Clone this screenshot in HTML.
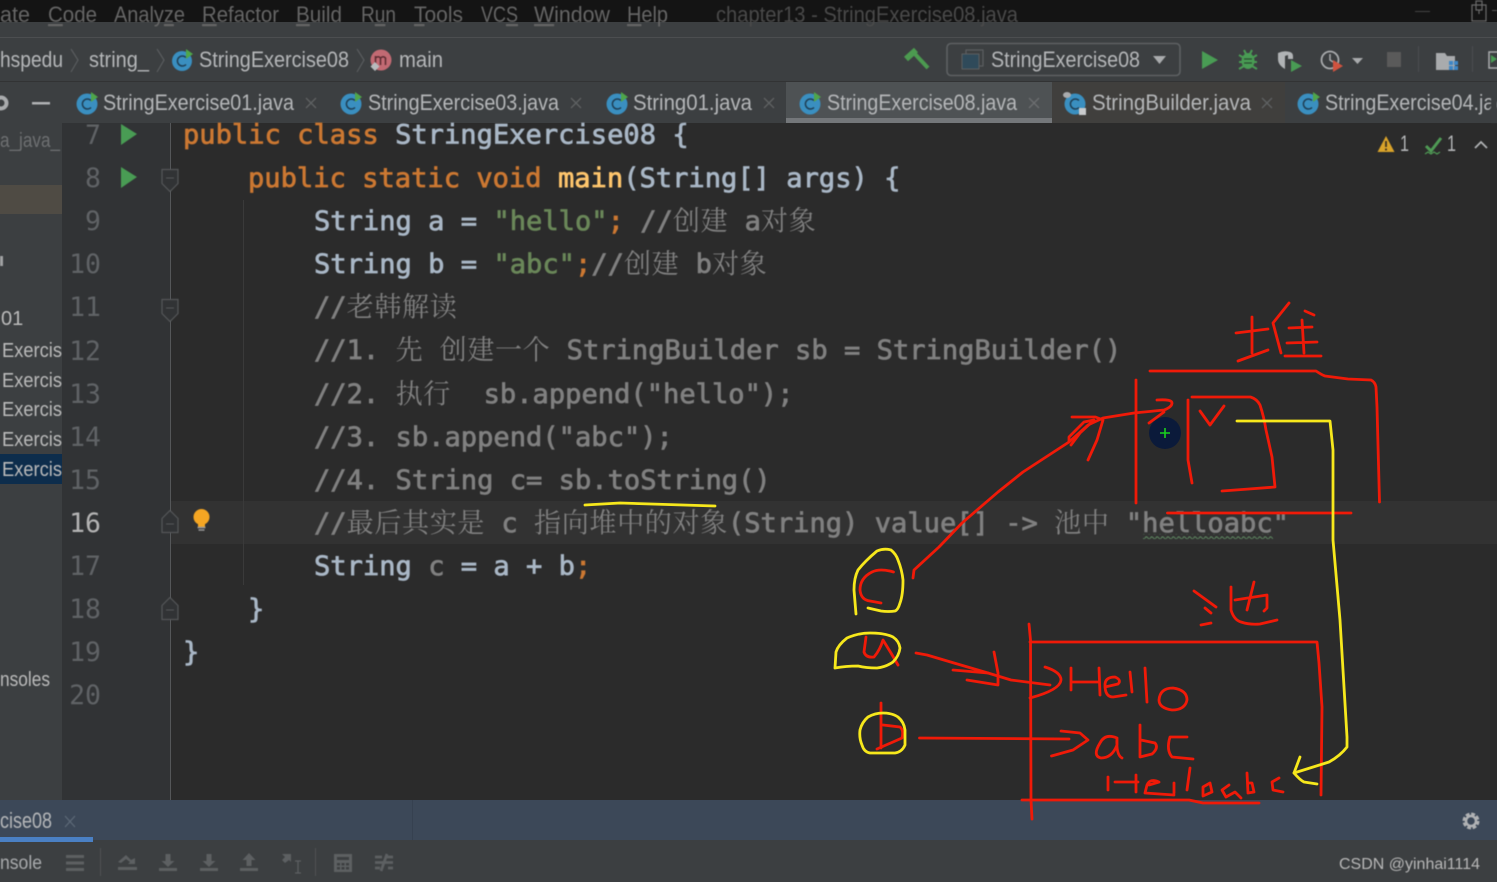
<!DOCTYPE html>
<html><head><meta charset="utf-8"><style>
html,body{margin:0;padding:0;background:#2b2b2b;overflow:hidden}
svg{display:block}
.m{font-family:"DejaVu Sans Mono","Noto Serif CJK SC",monospace;font-size:27.1px;white-space:pre;stroke-width:.75px}
.k{fill:#cc7832;stroke:#cc7832}.i{fill:#a9b7c6;stroke:#a9b7c6}.s{fill:#6a8759;stroke:#6a8759}.c{fill:#808080;stroke:#808080}.f{fill:#ffc66d;stroke:#ffc66d}
.z{letter-spacing:.6px;stroke-width:0}
.n{font-family:"DejaVu Sans Mono",monospace;font-size:26.500px;fill:#606366;text-anchor:end}
.u{font-family:"Liberation Sans","Noto Sans CJK SC",sans-serif;font-size:22px;fill:#bbbbbb}
.t{fill:#b5b7b9;font-size:22px}
.menu{fill:#666;font-size:22px}
.r{fill:none;stroke:#f01a08;stroke-width:2.8;stroke-linecap:round;stroke-linejoin:round}
.y{fill:none;stroke:#f7e81c;stroke-width:2.8;stroke-linecap:round;stroke-linejoin:round}
.ic{fill:#5d6062}
.txt{filter:blur(.4px)}
.ul{text-decoration:underline}
</style></head><body>
<svg width="1497" height="882" viewBox="0 0 1497 882" xmlns="http://www.w3.org/2000/svg">
<defs>
<pattern id="w" width="5.4" height="5" patternUnits="userSpaceOnUse"><path d="M0 3.5Q1.35 .5 2.7 2.5T5.4 3.5" fill="none" stroke="#5f8a62" stroke-width="1"/></pattern>
</defs>
<!-- base regions -->
<rect width="1497" height="882" fill="#2b2b2b"/>
<rect width="1497" height="22" fill="#141414"/>
<rect y="22" width="1497" height="60" fill="#3c3f41"/>
<rect y="37" width="1497" height="1" fill="#4c4e50"/>
<rect y="81" width="1497" height="1" fill="#323334"/>
<rect y="82" width="1497" height="41" fill="#3c3f41"/>
<rect x="786" y="82" width="266" height="36" fill="#4e5254"/>
<rect x="786" y="118" width="266" height="5" fill="#74777a"/>
<rect x="1052" y="82" width="233" height="41" fill="#403f3d"/>
<rect y="123" width="62" height="677" fill="#3c3f41"/>
<rect y="185" width="62" height="29" fill="#4f4b44"/>
<rect y="454" width="62" height="30" fill="#0d2d4c"/>
<rect x="62" y="123" width="108" height="677" fill="#313335"/>
<rect x="170" y="501" width="1327" height="43" fill="#323232"/>
<rect x="170" y="123" width="1" height="677" fill="#555759"/>
<rect x="243" y="200" width="1" height="385" fill="#3a3a3a"/>
<rect y="800" width="1497" height="40" fill="#3c4858"/>
<rect x="412" y="800" width="1" height="40" fill="#364150"/>
<rect y="840" width="1497" height="42" fill="#3c3f41"/>
<rect y="837" width="93" height="5" fill="#4a80c4"/>

<g class="txt">
<!-- menu -->
<text class="u menu" x="-12" y="22" textLength="42" lengthAdjust="spacingAndGlyphs">gate</text>
<text class="u menu" x="48" y="22" textLength="49" lengthAdjust="spacingAndGlyphs"><tspan class="ul">C</tspan>ode</text>
<text class="u menu" x="114" y="22" textLength="71" lengthAdjust="spacingAndGlyphs">Analy<tspan class="ul">z</tspan>e</text>
<text class="u menu" x="202" y="22" textLength="77" lengthAdjust="spacingAndGlyphs"><tspan class="ul">R</tspan>efactor</text>
<text class="u menu" x="296" y="22" textLength="46" lengthAdjust="spacingAndGlyphs"><tspan class="ul">B</tspan>uild</text>
<text class="u menu" x="361" y="22" textLength="35" lengthAdjust="spacingAndGlyphs">R<tspan class="ul">u</tspan>n</text>
<text class="u menu" x="414" y="22" textLength="49" lengthAdjust="spacingAndGlyphs"><tspan class="ul">T</tspan>ools</text>
<text class="u menu" x="481" y="22" textLength="37" lengthAdjust="spacingAndGlyphs">VC<tspan class="ul">S</tspan></text>
<text class="u menu" x="534" y="22" textLength="76" lengthAdjust="spacingAndGlyphs"><tspan class="ul">W</tspan>indow</text>
<text class="u menu" x="627" y="22" textLength="41" lengthAdjust="spacingAndGlyphs"><tspan class="ul">H</tspan>elp</text>
<text class="u" style="fill:#4a4a4a" x="716" y="22" textLength="302" lengthAdjust="spacingAndGlyphs">chapter13 - StringExercise08.java</text>
<rect x="1415" y="11" width="15" height="1" fill="#444"/>
<path d="M1472 5h14v16h-14zM1476 1h6v9h-6zM1479 10v4" fill="none" stroke="#6a6a6a" stroke-width="1.2"/>
<rect x="1492" y="10" width="5" height="1" fill="#555"/>

<!-- breadcrumb -->
<text class="u t" x="0" y="67" textLength="63" lengthAdjust="spacingAndGlyphs">hspedu</text>
<path d="M71 49l7 11-7 12" fill="none" stroke="#5a5d5f" stroke-width="1.2"/>
<text class="u t" x="89" y="67" textLength="60" lengthAdjust="spacingAndGlyphs">string_</text>
<path d="M157 49l7 11-7 12" fill="none" stroke="#5a5d5f" stroke-width="1.2"/>
<circle cx="182" cy="61" r="10" fill="#3a8fc0"/><path d="M186 57.5a5 5 0 1 0 0 7" fill="none" stroke="#1f3f55" stroke-width="1.5"/><path d="M186 49l7 5-7 5z" fill="#4fa64a"/>
<text class="u t" x="199" y="67" textLength="150" lengthAdjust="spacingAndGlyphs">StringExercise08</text>
<path d="M357 49l7 11-7 12" fill="none" stroke="#5a5d5f" stroke-width="1.2"/>
<circle cx="381" cy="60" r="10.5" fill="#c26a73"/>
<path d="M375.500 65v-9m0 2q2.800-2.500 5 0v7m0-7q2.800-2.500 5 0v7" fill="none" stroke="#5a2a30" stroke-width="1.500"/>
<path d="M375 62l4.500 4.500-4.500 4.500-4.500-4.500z" fill="#b8bbbd"/>
<text class="u t" x="399" y="67" textLength="44" lengthAdjust="spacingAndGlyphs">main</text>

<!-- toolbar right -->
<path d="M906 59L916 50" stroke="#4c9a50" stroke-width="6" fill="none"/><path d="M914 53L928 68" stroke="#4c9a50" stroke-width="4" fill="none"/>
<rect x="947" y="43.500" width="233" height="32" rx="4" fill="none" stroke="#5e6163" stroke-width="1.600"/>
<rect x="966" y="50" width="17" height="16" fill="none" stroke="#5c5f61" stroke-width="1.200"/>
<rect x="962" y="54" width="17" height="15" fill="#2f4a5a" stroke="#5c5f61"/>
<text class="u t" x="991" y="67" textLength="149" lengthAdjust="spacingAndGlyphs">StringExercise08</text>
<path d="M1153 56h13l-6.500 8z" fill="#a9abad"/>
<path d="M1202 51l16 9-16 9z" fill="#499c54"/>
<ellipse cx="1248" cy="61" rx="6.500" ry="8" fill="#499c54"/><path d="M1239 55l5 3M1257 55l-5 3M1239 62h5M1257 62h-5M1239 69l5-3M1257 69l-5-3M1244 50l2 4M1252 50l-2 4" stroke="#499c54" stroke-width="2"/><path d="M1244 59h8M1244 63h8" stroke="#2a4a30" stroke-width="1.200"/>
<path d="M1278 53q6-3 12-1q3 1 3 4v3h-5v-4l-3 1v13q-7-4-7-10z" fill="#b0b3b5"/><path d="M1291 60l11 6-11 6z" fill="#499c54"/>
<circle cx="1330" cy="60" r="8.500" fill="none" stroke="#a9abad" stroke-width="1.800"/><path d="M1330 54v6l3 2" fill="none" stroke="#a9abad" stroke-width="1.500"/><path d="M1333 60l10 6-10 6z" fill="#d0533f"/>
<path d="M1352 58h11l-5.500 6z" fill="#a9abad"/>
<rect x="1387" y="52" width="14" height="15" fill="#5a5a5a"/>
<rect x="1418" y="46" width="1" height="26" fill="#4c4e50"/>
<path d="M1436 53h9l2 3h8v14h-19z" fill="#a9abad"/><rect x="1449" y="61" width="4" height="4" fill="#3d86c6"/><rect x="1454" y="61" width="4" height="4" fill="#3d86c6"/><rect x="1449" y="66" width="4" height="4" fill="#3d86c6"/><rect x="1454" y="66" width="4" height="4" fill="#3d86c6"/>
<rect x="1472" y="46" width="1" height="26" fill="#4c4e50"/>
<rect x="1489" y="52" width="12" height="16" fill="none" stroke="#a9abad" stroke-width="1.500"/><path d="M1491 55l6 4-6 4z" fill="#499c54"/>

<!-- tab bar -->
<circle cx="1" cy="103" r="5.500" fill="none" stroke="#a9abad" stroke-width="4"/>
<rect x="32" y="102" width="18" height="2.500" fill="#b0b2b4"/>

<circle cx="87" cy="104" r="10.500" fill="#3a8fc0"/><path d="M91 100.500a5 5 0 1 0 0 7" fill="none" stroke="#1f3f55" stroke-width="1.500"/><path d="M91 92l7 5-7 5z" fill="#4fa64a"/>
<text class="u t" x="103" y="110" textLength="191" lengthAdjust="spacingAndGlyphs">StringExercise01.java</text>
<path d="M306 98l10 10M316 98l-10 10" stroke="#5f6163" stroke-width="1.300"/>

<circle cx="351" cy="104" r="10.500" fill="#3a8fc0"/><path d="M355 100.500a5 5 0 1 0 0 7" fill="none" stroke="#1f3f55" stroke-width="1.500"/><path d="M355 92l7 5-7 5z" fill="#4fa64a"/>
<text class="u t" x="368" y="110" textLength="191" lengthAdjust="spacingAndGlyphs">StringExercise03.java</text>
<path d="M571 98l10 10M581 98l-10 10" stroke="#5f6163" stroke-width="1.300"/>

<circle cx="617" cy="104" r="10.500" fill="#3a8fc0"/><path d="M621 100.500a5 5 0 1 0 0 7" fill="none" stroke="#1f3f55" stroke-width="1.500"/><path d="M621 92l7 5-7 5z" fill="#4fa64a"/>
<text class="u t" x="633" y="110" textLength="119" lengthAdjust="spacingAndGlyphs">String01.java</text>
<path d="M764 98l10 10M774 98l-10 10" stroke="#5f6163" stroke-width="1.300"/>

<circle cx="810" cy="104" r="10.500" fill="#3a8fc0"/><path d="M814 100.500a5 5 0 1 0 0 7" fill="none" stroke="#1f3f55" stroke-width="1.500"/><path d="M814 92l7 5-7 5z" fill="#4fa64a"/>
<text class="u t" x="827" y="110" textLength="190" lengthAdjust="spacingAndGlyphs">StringExercise08.java</text>
<path d="M1029 98l10 10M1039 98l-10 10" stroke="#6c6e70" stroke-width="1.300"/>

<circle cx="1075" cy="104" r="10.500" fill="#3a8fc0"/><path d="M1079 100.500a5 5 0 1 0 0 7" fill="none" stroke="#1f3f55" stroke-width="1.500"/><ellipse cx="1067" cy="95" rx="4" ry="3" fill="#a9abad"/><rect x="1079" y="108" width="7" height="7" fill="#c9cbcd"/>
<text class="u t" x="1092" y="110" textLength="159" lengthAdjust="spacingAndGlyphs">StringBuilder.java</text>
<path d="M1262 98l10 10M1272 98l-10 10" stroke="#5f6163" stroke-width="1.300"/>

<circle cx="1308" cy="104" r="10.500" fill="#3a8fc0"/><path d="M1312 100.500a5 5 0 1 0 0 7" fill="none" stroke="#1f3f55" stroke-width="1.500"/><path d="M1313 92l7 5-7 5z" fill="#4fa64a"/>
<text class="u t" x="1325" y="110" textLength="190" lengthAdjust="spacingAndGlyphs">StringExercise04.java</text>
<rect x="1491" y="82" width="6" height="41" fill="#3c3f41"/>

<!-- sidebar -->
<text class="u" style="fill:#6e7072;font-size:20px" x="0" y="147" textLength="60" lengthAdjust="spacingAndGlyphs">a_java_</text>
<rect x="0" y="256" width="3" height="10" fill="#a0a2a4"/>
<text class="u" style="font-size:20px" x="1" y="325">01</text>
<text class="u" style="font-size:20px" x="2" y="357" textLength="60" lengthAdjust="spacingAndGlyphs">Exercis</text>
<text class="u" style="font-size:20px" x="2" y="387" textLength="60" lengthAdjust="spacingAndGlyphs">Exercis</text>
<text class="u" style="font-size:20px" x="2" y="416" textLength="60" lengthAdjust="spacingAndGlyphs">Exercis</text>
<text class="u" style="font-size:20px" x="2" y="446" textLength="60" lengthAdjust="spacingAndGlyphs">Exercis</text>
<text class="u" style="font-size:20px" x="2" y="476" textLength="60" lengthAdjust="spacingAndGlyphs">Exercis</text>
<text class="u" style="font-size:20px" x="0" y="686" textLength="50" lengthAdjust="spacingAndGlyphs">nsoles</text>

<!-- line numbers -->
<text class="n" x="101" y="144">7</text>
<text class="n" x="101" y="187">8</text>
<text class="n" x="101" y="230">9</text>
<text class="n" x="101" y="273">10</text>
<text class="n" x="101" y="316">11</text>
<text class="n" x="101" y="360">12</text>
<text class="n" x="101" y="403">13</text>
<text class="n" x="101" y="446">14</text>
<text class="n" x="101" y="489">15</text>
<text class="n" x="101" y="532" style="fill:#b4b4b4">16</text>
<text class="n" x="101" y="575">17</text>
<text class="n" x="101" y="618">18</text>
<text class="n" x="101" y="661">19</text>
<text class="n" x="101" y="704">20</text>

<!-- gutter icons -->
<path d="M121 124l16 10-16 11z" fill="#499c54"/>
<path d="M121 167l16 10-16 11z" fill="#499c54"/>
<path d="M162 169.500h16v14l-8 8-8-8z" fill="#313335" stroke="#555759" stroke-width="1.200"/><path d="M166 178h8" stroke="#555759"/>
<path d="M162 299.500h16v14l-8 8-8-8z" fill="#313335" stroke="#555759" stroke-width="1.200"/><path d="M166 308h8" stroke="#555759"/>
<path d="M162 532.500h16v-14l-8-8-8 8z" fill="#313335" stroke="#555759" stroke-width="1.200"/><path d="M166 524h8" stroke="#555759"/>
<path d="M162 619.500h16v-14l-8-8-8 8z" fill="#313335" stroke="#555759" stroke-width="1.200"/><path d="M166 610h8" stroke="#555759"/>
<circle cx="201.500" cy="517" r="8" fill="#f5a623"/><path d="M198 524h7v3h-7z" fill="#f5a623"/><path d="M197.500 527.500h8M198.500 530h6" stroke="#9a9a9a" stroke-width="1.500"/>

<!-- code -->
<text class="m" y="143.500" x="183"><tspan class="k">public class </tspan><tspan class="i">StringExercise08 {</tspan></text>
<text class="m" y="187" x="248"><tspan class="k">public static void </tspan><tspan class="f">main</tspan><tspan class="i">(String[] args) {</tspan></text>
<text class="m" y="230" x="314"><tspan class="i">String a = </tspan><tspan class="s">"hello"</tspan><tspan class="k">;</tspan><tspan class="c"> //</tspan><tspan class="c z">创建</tspan><tspan class="c"> a</tspan><tspan class="c z">对象</tspan></text>
<text class="m" y="273" x="314"><tspan class="i">String b = </tspan><tspan class="s">"abc"</tspan><tspan class="k">;</tspan><tspan class="c">//</tspan><tspan class="c z">创建</tspan><tspan class="c"> b</tspan><tspan class="c z">对象</tspan></text>
<text class="m c" y="316" x="314">//<tspan class="z">老韩解读</tspan></text>
<text class="m c" y="359" x="314">//1. <tspan class="z">先</tspan> <tspan class="z">创建一个</tspan> StringBuilder sb = StringBuilder()</text>
<text class="m c" y="403" x="314">//2. <tspan class="z">执行</tspan>  sb.append("hello");</text>
<text class="m c" y="446" x="314">//3. sb.append("abc");</text>
<text class="m c" y="489" x="314">//4. String c= sb.toString()</text>
<text class="m c" y="532" x="314">//<tspan class="z">最后其实是</tspan> c <tspan class="z">指向堆中的对象</tspan>(String) value[] -> <tspan class="z">池中</tspan> "helloabc"</text>
<text class="m" y="575" x="314"><tspan class="i">String </tspan><tspan class="c">c</tspan><tspan class="i"> = a + b</tspan><tspan class="k">;</tspan></text>
<text class="m i" y="618" x="248">}</text>
<text class="m i" y="661" x="183">}</text>
<rect x="1143" y="534" width="130" height="5" fill="url(#w)"/>

<!-- inspections -->
<path d="M1386 136l8.500 16h-17z" fill="#d9a32a"/><path d="M1386 141v6M1386 148.500v2" stroke="#3a3020" stroke-width="1.800"/>
<text class="u t" x="1400" y="151" textLength="9" lengthAdjust="spacingAndGlyphs">1</text>
<path d="M1426 146l5 5 10-13" fill="none" stroke="#4f9a55" stroke-width="3"/><path d="M1425 154l3-2 3 2 3-2 3 2 3-2" fill="none" stroke="#4f9a55" stroke-width="1.200"/>
<text class="u t" x="1447" y="151" textLength="9" lengthAdjust="spacingAndGlyphs">1</text>
<path d="M1475 148l6-6 6 6" fill="none" stroke="#b0b2b4" stroke-width="1.800"/>

<!-- bottom -->
<text class="u t" x="0" y="828" textLength="52" lengthAdjust="spacingAndGlyphs">cise08</text>
<path d="M65 816l10 11M75 816l-10 11" stroke="#5d6977" stroke-width="1.300"/>
<circle cx="1471" cy="821" r="6.500" fill="none" stroke="#b0b2b4" stroke-width="4" stroke-dasharray="3.500 1.600"/>
<circle cx="1471" cy="821" r="5" fill="none" stroke="#b0b2b4" stroke-width="2.500"/>
<text class="u" style="font-size:19px;fill:#a9abad" x="0" y="869" textLength="42" lengthAdjust="spacingAndGlyphs">nsole</text>
<path class="ic" d="M66 855h18v3h-18zM66 861.500h18v3h-18zM66 868h18v3h-18z"/>
<rect x="100" y="848" width="1" height="28" fill="#505254"/>
<path d="M118 867h19v3h-19z M118 862l8-7 5 5 4-2v6h-7l2-2-4-3-5 4z" class="ic"/>
<path d="M159 868h18v3h-18zM165.500 854h5v7h4l-6.500 6-6.500-6h4z" class="ic"/>
<path d="M200 868h18v3h-18zM206.500 854h5v7h4l-6.500 6-6.500-6h4z" class="ic"/>
<path d="M240 868h18v3h-18zM246.500 866h5v-6h4l-6.500-7-6.500 7h4z" class="ic"/>
<path d="M282 854h9v8l-2-2-4 3-3-3 3-3z" class="ic"/><path d="M295 861h6M295 873h6M298 861v12" stroke="#5d6062" stroke-width="1.200"/>
<rect x="315" y="848" width="1" height="28" fill="#505254"/>
<path d="M334 854h18v18h-18zM337 857v3h12v-3zM337 863v2.500h3v-2.500zM341.500 863v2.500h3v-2.500zM346 863v2.500h3v-2.500zM337 867v2.500h3v-2.500zM341.500 867v2.500h3v-2.500zM346 867v2.500h3v-2.500z" class="ic" fill-rule="evenodd"/>
<path d="M375 857h7M386 857h7M375 868h5M388 868h5M375 862.500h18M387 854l-6 17" stroke="#5d6062" stroke-width="2.800" fill="none"/>
</g>

<!-- hand drawing: red -->
<g class="r">
<!-- 堆 -->
<path d="M1236 333L1268 329M1252 317L1252 353M1238 361L1268 350M1289 303L1273 323L1281 353M1305 311L1314 315M1289 328L1312 327M1287 343L1317 342M1285 356L1321 356M1302 320L1304 353"/>
<!-- heap box -->
<path d="M1150 371L1316 371Q1322 375 1325 376L1348 379L1371 380Q1375 382 1376 387L1377 407L1379.500 502"/>
<path d="M1136 380L1136 503"/>
<path d="M1167.500 513L1351 513"/>
<path d="M1188 400L1188 460L1192 483"/>
<path d="M1192 397L1250.500 397Q1257 399 1260 405Q1264 417 1266 430L1272 457L1275 487L1249 489L1222 491"/>
<path d="M1200 411L1210 425L1224 406"/>
<!-- arrow from c -->
<path d="M913 578L914 570L939 547L962 523L998 492L1023 472L1069 442L1088 425L1103 418L1134 413L1164 410Q1172 407 1172 403Q1172 399 1157 400"/>
<path d="M1149 423L1164 412"/>
<path d="M1072 417L1095.500 417L1103 420L1097 440L1088 460"/>
<path d="M1069 442L1069 437L1084 422L1094 420L1080 433L1071 445"/>
<!-- red c -->
<path d="M893.500 572Q880 568 872 572Q860 578 860 590Q861 600 870 601L881 603"/>
<!-- red a -->
<path d="M866 637L864 652Q866 658 874 657Q880 650 883 640L891 653L898 665"/>
<!-- red b -->
<path d="M881 703L881 748M877 749L902 738Q904 730 900 727L883 725"/>
<!-- arrows to pool -->
<path d="M916 653L927 655L954 663L988 673L1011 680L1050 685"/>
<path d="M953 670L988 673M967 680L998 685L998 673L994 652"/>
<path d="M1045 667Q1061 672 1061 680Q1060 690 1030 698"/>
<path d="M919.500 738L1069 739"/>
<path d="M1061 731L1080 733L1088 740L1073 750L1051.500 756"/>
<!-- pool box -->
<path d="M1029 624L1030.500 640L1031 800L1032 819"/>
<path d="M1030 642L1317 642L1319 663L1322 707L1321 795"/>
<path d="M1022 800L1189 800L1203 803L1259 803"/>
<!-- 池 -->
<path d="M1194 591L1216 607M1205 608L1211 613M1201 625L1211 623"/>
<path d="M1231 587L1231 610Q1234 620 1241 622Q1250 625 1260 624L1277 620M1235 600L1267 595L1267 608L1264 611M1254 582L1247 610"/>
<!-- Hello -->
<path d="M1071 668L1071 690M1071 682L1099 682M1099 668L1100 695"/>
<path d="M1105 687L1118 684Q1122 680 1115 677Q1105 677 1105 685Q1105 697 1113 697L1126 695"/>
<path d="M1130 672L1132 692M1145 668L1147 702"/>
<path d="M1159 700Q1160 688 1173 688Q1187 690 1187 700Q1185 710 1172 710Q1159 708 1159 700Z"/>
<!-- abc -->
<path d="M1117 738Q1105 733 1100 743Q1092 756 1101 758Q1112 758 1117 745L1117 738Q1116 755 1122 758"/>
<path d="M1140 725L1140 757L1152 754Q1159 748 1155 743L1141 740"/>
<path d="M1187 737L1170 737Q1166 750 1172 757L1193 759"/>
<!-- Helloabc small -->
<path d="M1108 777L1108 790M1115 782L1138 782M1136 775L1136 792"/>
<path d="M1149 785L1159 782Q1150 778 1147 785L1145 793L1174 795M1174 783L1174 793M1190 768L1187 790"/>
<path d="M1203 787L1210 783L1212 792L1203 796Z"/>
<path d="M1229 785L1222 790L1226 797L1235 792L1241 798"/>
<path d="M1247 773L1248 793L1254 792L1252 783L1248 783"/>
<path d="M1279 778L1272 782L1273 790L1283 792"/>
</g>
<!-- hand drawing: yellow -->
<g class="y">
<path d="M585 505L620 503L715 506"/>
<path d="M1237 421L1330 421L1333 450L1333 540L1340 620L1347 737L1347 747Q1340 756 1329 762L1294 773"/>
<path d="M1300 757L1294 773Q1300 780 1304 782L1317 784"/>
<path d="M856 614L854 590Q854 578 858 570Q862 565 866 561Q871 556 877 551Q884 548 891 550Q896 554 898 560Q902 570 903 580Q903 595 900 603Q898 610 895 611Q888 612 881 611L868 608"/>
<path d="M835 668L836 652Q838 645 847 638Q858 633 870 633Q885 633 893 637Q899 641 900 648Q899 656 893 662Q886 667 877 668Q866 668 858 666Q846 666 835 668"/>
<path d="M862 745Q859 738 860 730Q862 722 868 717Q875 713 883 713Q892 713 898 717Q904 722 905 730L905 745Q902 752 895 753L870 753Q864 752 862 745"/>
</g>
<!-- cursor -->
<ellipse cx="1165" cy="433" rx="16" ry="16" fill="#0b1a3a"/>
<path d="M1160 433h10M1165 428v10" stroke="#19d11c" stroke-width="1.600"/>
<!-- watermark -->
<text class="txt" x="1339" y="869" font-family="Liberation Sans, sans-serif" font-size="15.500" fill="#b8b8b8" textLength="141" lengthAdjust="spacingAndGlyphs">CSDN @yinhai1114</text>
</svg>
</body></html>
